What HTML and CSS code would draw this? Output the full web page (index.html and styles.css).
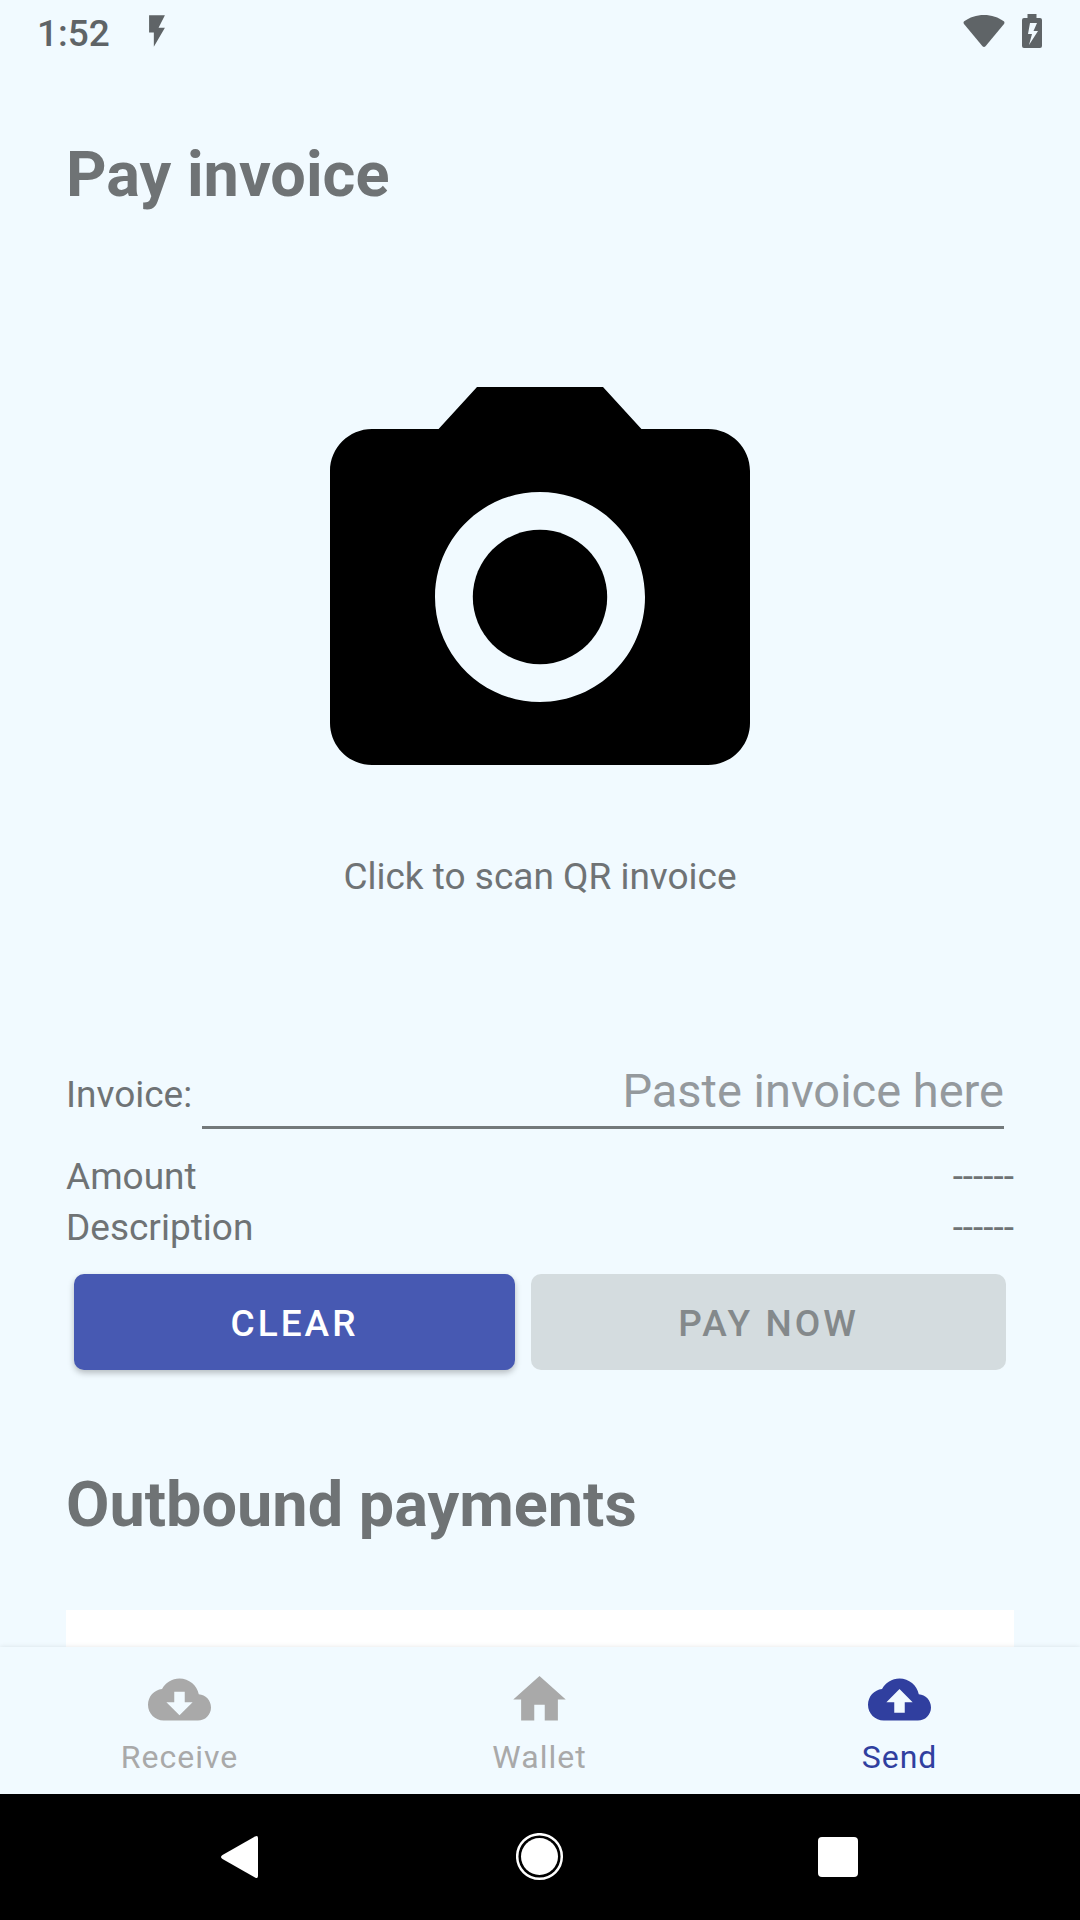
FILE: index.html
```
<!DOCTYPE html>
<html lang="en">
<head>
<meta charset="utf-8">
<meta name="viewport" content="width=device-width, initial-scale=1">
<title>Pay invoice</title>
<link rel="stylesheet" href="styles.css">
</head>
<body>
<div class="screen">
  <header class="status">
    <span class="status-time">1:52</span>
    <svg class="status-bolt" viewBox="0 0 24 24" aria-hidden="true"><path d="M7 2v11h3v9l7-12h-4l4-8z"/></svg>
    <svg class="status-wifi" viewBox="0 0 42 34" aria-hidden="true"><path d="M21 1C13.500 1 6.500 3.300 1.200 7.300 0.400 8 0.300 9 1 10L19.500 32.300C20.400 33.300 21.600 33.300 22.500 32.300L41 10C41.700 9 41.600 8 40.800 7.300 35.500 3.300 28.500 1 21 1Z"/></svg>
    <svg class="status-battery" viewBox="0 0 20 34" aria-hidden="true"><path fill-rule="evenodd" d="M5.500 0h9v4H18q2 0 2 2v26q0 2-2 2H2q-2 0-2-2V6q0-2 2-2h3.500zM8 9L6 20h4L7 31l9-14h-4.500L15 9z"/></svg>
  </header>

  <main class="content">
    <h1 class="title">Pay invoice</h1>
    <button class="scan" type="button">
      <svg class="scan-icon" viewBox="0 0 24 24" aria-hidden="true"><circle cx="12" cy="12" r="3.200"/><path d="M9 2L7.170 4H4c-1.100 0-2 .9-2 2v12c0 1.100.9 2 2 2h16c1.100 0 2-.9 2-2V6c0-1.100-.9-2-2-2h-3.170L15 2H9zm3 15c-2.760 0-5-2.240-5-5s2.240-5 5-5 5 2.240 5 5-2.240 5-5 5z"/></svg>
      <span>Click to scan QR invoice</span>
    </button>

    <form class="form">
      <div class="field">
        <label for="invoice">Invoice:</label>
        <input class="field-input" id="invoice" type="text" placeholder="Paste invoice here">
      </div>
      <dl class="details">
        <div class="detail"><dt>Amount</dt><dd>------</dd></div>
        <div class="detail"><dt>Description</dt><dd>------</dd></div>
      </dl>
      <div class="actions">
        <button class="button button-clear" type="reset">CLEAR</button>
        <button class="button button-pay" type="submit" disabled>PAY NOW</button>
      </div>
    </form>

    <h2 class="title title-list">Outbound payments</h2>
    <section class="payments" aria-label="Outbound payments"></section>
  </main>

  <nav class="tabs">
    <a class="tab" href="#receive">
      <svg class="tab-icon" viewBox="0 0 24 24" aria-hidden="true"><path d="M19.350 10.040C18.670 6.590 15.640 4 12 4 9.110 4 6.600 5.640 5.350 8.040 2.340 8.360 0 10.910 0 14c0 3.310 2.690 6 6 6h13c2.760 0 5-2.240 5-5 0-2.640-2.050-4.780-4.650-4.960zM17 13l-5 5-5-5h3V9h4v4h3z"/></svg>
      <span>Receive</span>
    </a>
    <a class="tab" href="#wallet">
      <svg class="tab-icon" viewBox="0 0 24 24" aria-hidden="true"><path d="M10 20v-6h4v6h5v-8h3L12 3 2 12h3v8z"/></svg>
      <span>Wallet</span>
    </a>
    <a class="tab tab-active" href="#send" aria-current="page">
      <svg class="tab-icon" viewBox="0 0 24 24" aria-hidden="true"><path d="M19.350 10.040C18.670 6.590 15.640 4 12 4 9.110 4 6.600 5.640 5.350 8.040 2.340 8.360 0 10.910 0 14c0 3.310 2.690 6 6 6h13c2.760 0 5-2.240 5-5 0-2.640-2.050-4.780-4.650-4.960zM14 13v4h-4v-4H7l5-5 5 5h-3z"/></svg>
      <span>Send</span>
    </a>
  </nav>

  <div class="system">
    <button class="system-key" type="button" aria-label="Back"><svg class="system-icon" viewBox="0 0 48 48"><path d="M41 5v38q0 3-3 1.500L5.500 26q-3-2 0-4L38 3.500q3-1.500 3 1.500z"/></svg></button>
    <button class="system-key" type="button" aria-label="Home"><svg class="system-icon" viewBox="0 0 48 48"><circle cx="23.500" cy="23.500" r="18.500"/><circle class="system-ring" cx="23.500" cy="23.500" r="22.300"/></svg></button>
    <button class="system-key" type="button" aria-label="Overview"><svg class="system-icon" viewBox="0 0 48 48"><rect x="3" y="4" width="40" height="40" rx="4"/></svg></button>
  </div>
</div>
</body>
</html>
```
FILE: styles.css
```
* {
  box-sizing: border-box;
}

body {
  margin: 0;
  background: #f1faff;
  color: #6f7375;
  font-family: Roboto, sans-serif;
  font-size: 37px;
  line-height: 43px;
}

button,
input {
  font: inherit;
  color: inherit;
  border: 0;
  background: none;
}

.screen {
  display: flex;
  flex-direction: column;
  height: 100vh;
}

/* Status bar */
.status {
  display: flex;
  flex: none;
  align-items: center;
  height: 62px;
  padding: 0 38px 0 37px;
  color: #5f6467;
  fill: currentColor;
  font-weight: 500;
}

.status-time {
  padding-top: 4px;
}

.status-bolt {
  width: 38px;
  height: 38px;
  margin-left: 28px;
}

.status-wifi {
  width: 42px;
  height: 34px;
  margin-left: auto;
}

.status-battery {
  width: 20px;
  height: 34px;
  margin-left: 17px;
}

/* Page content */
.content {
  flex: 1;
  min-height: 0;
  overflow-y: auto;
  padding: 76px 66px 0;
  scrollbar-width: none;
}

.title {
  margin: 0;
  font-size: 63px;
  font-weight: 700;
  line-height: 74px;
}

.title-list {
  margin: 98px 0 68px;
}

.scan {
  display: flex;
  flex-direction: column;
  align-items: center;
  gap: 6px;
  margin: 133px auto 165px;
  padding: 0;
}

.scan-icon {
  width: 504px;
  height: 504px;
  fill: #000;
}

.field {
  display: flex;
  align-items: baseline;
  gap: 10px;
  padding-right: 10px;
}

.field-input {
  flex: 1;
  min-width: 0;
  height: 66px;
  padding: 0 0 8px;
  border-bottom: 3px solid #73797b;
  border-radius: 0;
  font-size: 47px;
  text-align: right;
}

.field-input::placeholder {
  color: #94999d;
  opacity: 1;
}

.details {
  margin: 22px 0 21px;
  line-height: 51px;
}

.detail {
  display: flex;
  justify-content: space-between;
}

.detail dd {
  margin: 0;
}

.actions {
  display: flex;
  gap: 16px;
  padding: 0 8px;
}

.button {
  height: 96px;
  padding: 2px 0 0;
  border-radius: 10px;
  font-weight: 500;
  letter-spacing: 3px;
}

.button-clear {
  flex: 13 1 0;
  background: #4759b2;
  color: #fff;
  box-shadow: 0 3px 6px rgba(0, 0, 0, 0.25);
}

.button-pay {
  flex: 14 1 0;
  background: #d4dcdf;
  color: #84898b;
}

.payments {
  min-height: 400px;
  background: #fff;
}

/* Bottom tabs */
.tabs {
  display: flex;
  flex: none;
  position: relative;
  height: 147px;
  background: #f1faff;
  box-shadow: 0 0 5px rgba(0, 0, 0, 0.1);
}

.tab {
  display: flex;
  flex: 1;
  flex-direction: column;
  align-items: center;
  gap: 7px;
  padding: 21px 1px 0 0;
  color: #a9a9a9;
  fill: currentColor;
  font-size: 32px;
  line-height: 38px;
  letter-spacing: 1px;
  text-decoration: none;
}

.tab-active {
  color: #303f9f;
}

.tab-icon {
  width: 63px;
  height: 63px;
}

/* System navigation */
.system {
  display: flex;
  flex: none;
  align-items: center;
  justify-content: center;
  gap: 251px;
  height: 126px;
  background: #000;
}

.system-key {
  display: flex;
  padding: 0;
}

.system-icon {
  width: 48px;
  height: 48px;
  fill: #fff;
}

.system-ring {
  fill: none;
  stroke: #fff;
  stroke-width: 2.500;
}
```
